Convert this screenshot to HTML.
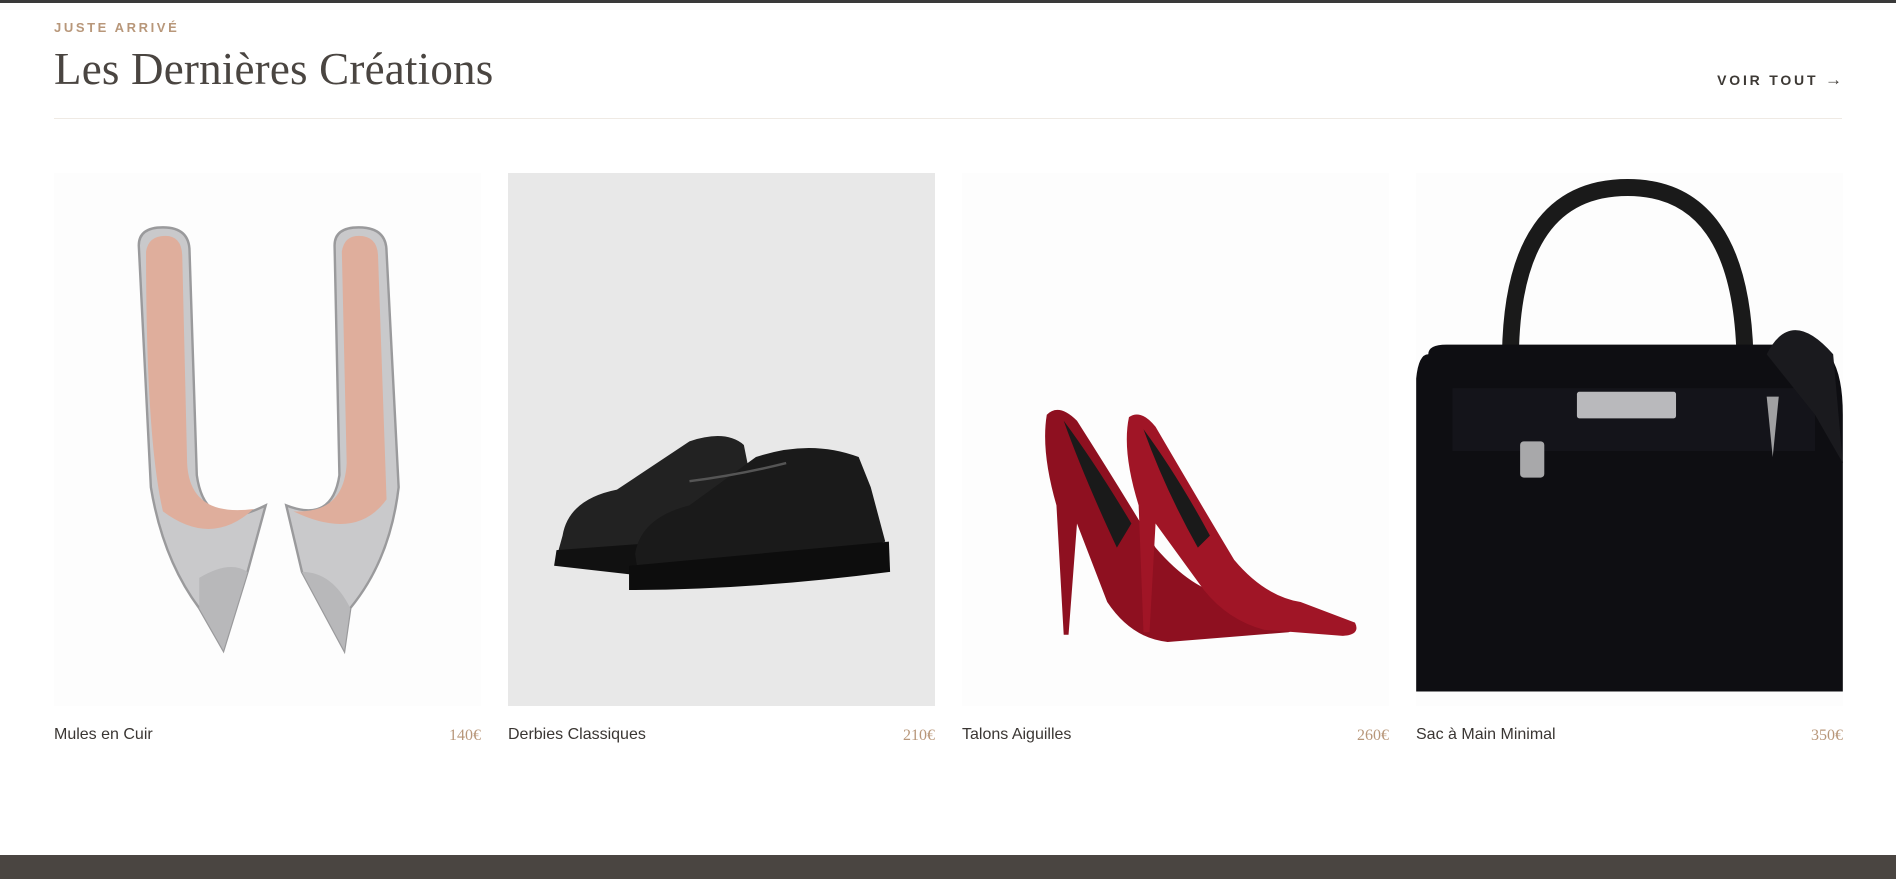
<!DOCTYPE html>
<html><head><meta charset="utf-8"><style>
*{margin:0;padding:0;box-sizing:border-box}
body{width:1896px;height:879px;background:#fff;position:relative;overflow:hidden;font-family:"Liberation Sans",sans-serif}
.top{position:absolute;left:0;top:0;width:1896px;height:3px;background:#3a3a3a}
.eyebrow{position:absolute;left:54px;top:20px;font-size:13px;font-weight:bold;letter-spacing:2.6px;color:#b8977a}
h1{position:absolute;left:54px;top:43px;font-family:"Liberation Serif",serif;font-weight:normal;font-size:45px;color:#4a4541;letter-spacing:0.2px}
.voir{position:absolute;right:54px;top:70px;font-size:14px;font-weight:bold;letter-spacing:2.8px;color:#3d3935}
.voir span{font-size:17px;font-weight:normal;letter-spacing:0}
.rule{position:absolute;left:54px;top:118px;width:1788px;height:1px;background:#efeae4}
.card{position:absolute;top:173px;width:427px;height:533px;background:#fdfdfd}
.card svg{width:427px;height:533px;display:block}
.cap{position:absolute;top:726px;font-size:16px;color:#3a3633}
.price{position:absolute;top:727px;font-family:"Liberation Serif",serif;font-size:16px;color:#b8977a;text-align:right}
.foot{position:absolute;left:0;top:855px;width:1896px;height:24px;background:#4a4541}
</style></head><body>
<div class="top"></div>
<div class="eyebrow">JUSTE ARRIVÉ</div>
<h1>Les Dernières Créations</h1>
<div class="voir">VOIR TOUT <span>→</span></div>
<div class="rule"></div>

<div class="card" style="left:54px">
<svg viewBox="0 0 353 441">
<g fill="#c9c9cb" stroke="#9a9a9c" stroke-width="2">
<path d="M70 60 Q70 45 90 45 Q112 45 112 65 L118 250 Q125 300 175 275 L160 330 L140 395 L120 360 Q90 320 80 260 Z"/>
<path d="M232 60 Q232 45 252 45 Q275 45 275 65 L285 260 Q278 320 245 360 L240 395 L205 330 L192 275 Q230 290 236 250 Z"/>
</g>
<path d="M76 65 Q78 52 92 52 Q106 52 106 70 L110 240 Q112 285 165 278 Q130 310 90 280 Q76 220 76 65Z" fill="#dfae9c"/>
<path d="M238 65 Q240 52 252 52 Q268 52 268 70 L275 270 Q250 305 198 280 Q240 282 242 240Z" fill="#dfae9c"/>
<path d="M120 360 L140 395 L160 330 Q145 320 120 335Z M205 330 L240 395 L245 360 Q230 330 205 330Z" fill="#b8b8ba"/>
</svg></div>

<div class="card" style="left:508px;background:#e8e8e8">
<svg viewBox="0 0 353 441">
<path d="M45 300 Q50 270 90 262 L150 222 Q180 212 195 225 L200 250 L205 300 Q160 320 100 322 L40 318Z" fill="#222"/>
<path d="M40 312 L205 300 L208 320 L100 332 L38 325Z" fill="#111"/>
<path d="M105 315 Q110 285 150 275 L205 235 Q250 220 290 235 L300 260 L312 305 Q250 325 190 330 L108 335Z" fill="#1a1a1a"/>
<path d="M100 325 L315 305 L316 330 Q200 345 100 345Z" fill="#0d0d0d"/>
<path d="M150 255 Q190 250 230 240" stroke="#555" stroke-width="2" fill="none"/>
</svg></div>

<div class="card" style="left:962px">
<svg viewBox="0 0 353 441">
<path d="M70 200 Q80 190 95 205 Q130 260 160 310 Q190 345 220 350 L275 360 Q285 375 270 380 L170 388 Q140 385 120 355 L95 290 L88 382 L84 382 L78 275 Q65 230 70 200Z" fill="#8e1020"/>
<path d="M138 202 Q148 195 160 210 Q195 270 225 320 Q250 350 280 355 L325 372 Q330 382 315 383 L250 378 Q220 370 200 345 L160 290 L155 380 L150 380 L146 275 Q132 230 138 202Z" fill="#a01526"/>
<path d="M84 205 Q110 240 140 290 L128 310 Q100 250 84 205Z M150 212 Q178 250 205 300 L195 310 Q168 262 150 212Z" fill="#1a1a1a"/>
</svg></div>

<div class="card" style="left:1416px">
<svg viewBox="0 0 353 441">
<path d="M78 150 Q80 12 175 12 Q268 12 272 150" stroke="#1a1a1a" stroke-width="14" fill="none"/>
<path d="M10 150 Q10 142 25 142 L330 142 Q353 150 353 200 L353 429 L0 429 L0 170 Q2 150 10 150Z" fill="#0e0e12"/>
<path d="M30 178 L330 178 L330 230 L30 230Z" fill="#14141a"/>
<rect x="133" y="181" width="82" height="22" rx="2" fill="#b9b9bc"/>
<rect x="86" y="222" width="20" height="30" rx="3" fill="#a8a8aa"/>
<path d="M290 185 L295 235 L300 185" fill="#a0a0a2"/>
<path d="M290 150 Q310 110 345 150 L353 240 L330 200Z" fill="#1a1a1e"/>
</svg></div>

<div class="cap" style="left:54px">Mules en Cuir</div>
<div class="price" style="left:381px;width:100px">140€</div>
<div class="cap" style="left:508px">Derbies Classiques</div>
<div class="price" style="left:835px;width:100px">210€</div>
<div class="cap" style="left:962px">Talons Aiguilles</div>
<div class="price" style="left:1289px;width:100px">260€</div>
<div class="cap" style="left:1416px">Sac à Main Minimal</div>
<div class="price" style="left:1743px;width:100px">350€</div>
<div class="foot"></div>
</body></html>
